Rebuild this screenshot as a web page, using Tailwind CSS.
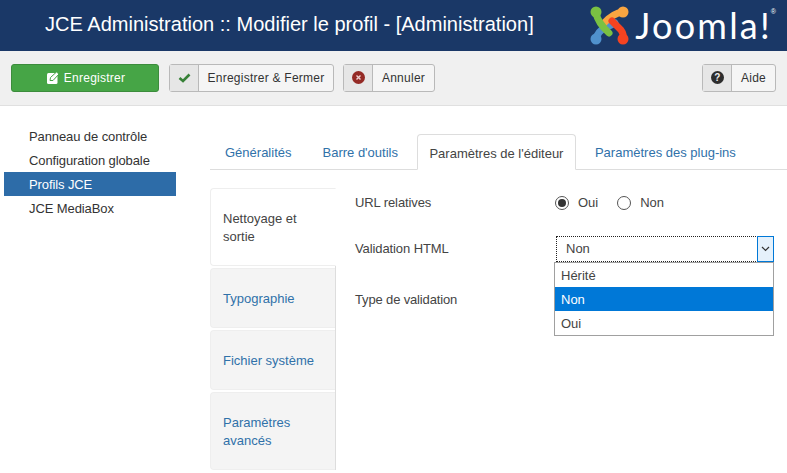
<!DOCTYPE html>
<html lang="fr">
<head>
<meta charset="UTF-8">
<title>JCE Administration</title>
<script src="https://cdn.jsdelivr.net/npm/@tailwindcss/browser@4"></script>
</head>
<body class="bg-white font-['Liberation_Sans',Arial,sans-serif] text-[13px] text-[#333] overflow-hidden h-[473px]">

<!-- header -->
<header class="h-[51px] bg-[#1a3867] flex items-center justify-between pl-[45px] pr-[11px]">
  <h1 class="text-[20.05px] text-white -mt-[2px]">JCE Administration :: Modifier le profil - [Administration]</h1>
  <div class="flex items-center">
    <svg width="40" height="42" viewBox="592 4 40 42" class="mr-[5px]">
      <g fill="none" stroke-width="7" stroke-linecap="round">
        <path d="M598 38 Q600 30 607 27 L617 22" stroke="#5091cd"/>
        <path d="M625 11 Q615 12 605 23" stroke="#f9a541"/>
        <path d="M598 12 Q600 22 611 32" stroke="#7ac143"/>
        <path d="M614 20 L623 29 Q626 33 625 38" stroke="#f44321"/>
      </g>
      <circle cx="598" cy="11" r="5.5" fill="#7ac143"/>
      <circle cx="625" cy="11" r="5.5" fill="#f9a541"/>
      <circle cx="598" cy="38" r="5.5" fill="#5091cd"/>
      <circle cx="625" cy="38" r="5.5" fill="#f44321"/>
    </svg>
    <span class="font-['Lato',sans-serif] text-[36px] leading-none font-normal text-white tracking-[2.2px] -mt-[1px]">Joomla!</span>
    <span class="text-[7px] text-white self-start -ml-[1px] mt-[2px]">®</span>
  </div>
</header>

<!-- toolbar -->
<div class="h-[55px] bg-[#f0f0f0] border-b border-[#e0e0e0] flex items-center px-[11px] pb-[1px]">
  <button class="w-[148px] h-[28px] pl-[2px] bg-[#46a546] border border-[#3c8c3c] rounded-[3px] text-white flex items-center justify-center gap-[5px] text-[12px] tracking-[0.25px]">
    <svg width="12" height="12" viewBox="0 0 12 12"><rect x="0" y="1" width="10.5" height="11" rx="1.5" fill="#fff"/><path d="M3 8.5 L3.5 5.5 L9.5 0 L12 2 L6 8.5 Z" fill="#fff" stroke="#46a546" stroke-width="1"/></svg>
    Enregistrer
  </button>
  <button class="ml-[10px] w-[165px] h-[28px] flex items-stretch border border-[#b9b9b9] rounded-[3px] bg-[#f5f5f5] text-[12px] tracking-[0.25px]">
    <span class="w-[29px] bg-[#e6e6e6] border-r border-[#b9b9b9] flex items-center justify-center">
      <svg width="13" height="10" viewBox="0 0 13 10"><path d="M1.5 5 L5 8 L11.5 1.5" fill="none" stroke="#378137" stroke-width="2.6"/></svg>
    </span>
    <span class="flex-1 flex items-center justify-center">Enregistrer &amp; Fermer</span>
  </button>
  <button class="ml-[9px] w-[92px] h-[28px] flex items-stretch border border-[#b9b9b9] rounded-[3px] bg-[#f5f5f5] text-[12px] tracking-[0.25px]">
    <span class="w-[29px] bg-[#e6e6e6] border-r border-[#b9b9b9] flex items-center justify-center">
      <svg width="13" height="13" viewBox="0 0 13 13"><circle cx="6.5" cy="6.5" r="6.5" fill="#942a25"/><path d="M4.5 4.5 L8.5 8.5 M8.5 4.5 L4.5 8.5" stroke="#f0d0d0" stroke-width="1.4"/></svg>
    </span>
    <span class="flex-1 flex items-center justify-center">Annuler</span>
  </button>
  <button class="ml-auto w-[74px] h-[28px] flex items-stretch border border-[#b9b9b9] rounded-[3px] bg-[#f5f5f5] text-[12px] tracking-[0.25px]">
    <span class="w-[29px] bg-[#e6e6e6] border-r border-[#b9b9b9] flex items-center justify-center">
      <svg width="13" height="13" viewBox="0 0 13 13"><circle cx="6.5" cy="6.5" r="6.5" fill="#2d2d2d"/><text x="6.5" y="10.2" text-anchor="middle" font-size="10" font-weight="700" font-family="Liberation Sans" fill="#f0f0f0">?</text></svg>
    </span>
    <span class="flex-1 flex items-center justify-center">Aide</span>
  </button>
</div>

<div class="flex">
  <!-- side menu -->
  <nav class="w-[172px] ml-[4px] pt-[18px] shrink-0 tracking-[-0.1px]">
    <a class="block h-[24px] leading-[25px] pl-[25px]">Panneau de contrôle</a>
    <a class="block h-[24px] leading-[25px] pl-[25px]">Configuration globale</a>
    <a class="block h-[24px] leading-[25px] pl-[25px] bg-[#2d6ca8] text-white">Profils JCE</a>
    <a class="block h-[24px] leading-[25px] pl-[25px]">JCE MediaBox</a>
  </nav>

  <main class="ml-[34px] flex-1 pt-[28px]">
    <!-- tabs -->
    <div class="flex h-[36px] border-b border-[#ddd] pl-[2px] text-[#3071a9]">
      <a class="px-[13px] leading-[38px]">Généralités</a>
      <a class="ml-[5px] px-[13px] leading-[38px]">Barre d'outils</a>
      <a class="ml-[6px] w-[159px] text-center h-[36px] leading-[38px] bg-white border border-[#ddd] border-b-white rounded-t-[4px] text-[#444]">Paramètres de l'éditeur</a>
      <a class="ml-[6px] px-[13px] leading-[38px]">Paramètres des plug-ins</a>
    </div>

    <div class="flex mt-[18px]">
      <!-- vertical tabs -->
      <div class="w-[126px] shrink-0 flex flex-col gap-[2px] border-r border-[#ddd]">
        <div class="h-[78px] -mr-[1px] px-[12px] pt-[2px] flex items-center leading-[18px] bg-white border border-[#eee] border-r-white rounded-l-[4px] text-[#444]">Nettoyage et<br>sortie</div>
        <div class="h-[60px] px-[12px] pt-[2px] flex items-center leading-[18px] bg-[#f4f4f4] border border-[#eee] border-r-0 rounded-l-[4px] text-[#3071a9]">Typographie</div>
        <div class="h-[60px] px-[12px] pt-[2px] flex items-center leading-[18px] bg-[#f4f4f4] border border-[#eee] border-r-0 rounded-l-[4px] text-[#3071a9]">Fichier système</div>
        <div class="h-[78px] px-[12px] pt-[2px] flex items-center leading-[18px] bg-[#f4f4f4] border border-[#eee] border-r-0 rounded-l-[4px] text-[#3071a9]">Paramètres<br>avancés</div>
      </div>

      <!-- form -->
      <div class="relative flex-1 pl-[19px] text-[#444]">
        <div class="flex items-center h-[28px] pt-[2px]">
          <span class="w-[200px] tracking-[-0.1px]">URL relatives</span>
          <span class="w-[14px] h-[14px] rounded-full border border-[#555] flex items-center justify-center"><span class="w-[8px] h-[8px] rounded-full bg-[#333]"></span></span>
          <span class="ml-[9px]">Oui</span>
          <span class="ml-[19px] w-[14px] h-[14px] rounded-full border border-[#555]"></span>
          <span class="ml-[9px]">Non</span>
        </div>
        <div class="flex items-center h-[27px] mt-[19px]">
          <span class="w-[201px] tracking-[-0.1px]">Validation HTML</span>
          <div class="w-[218px] h-[26px] border border-dotted border-[#222] flex items-center justify-between pl-[9px]">
            Non
            <span class="w-[17px] h-[26px] -mr-[1px] bg-[#e5f1fb] border border-[#0078d7] flex items-center justify-center">
              <svg width="9" height="6" viewBox="0 0 9 6"><path d="M1 1 L4.5 4.5 L8 1" fill="none" stroke="#333" stroke-width="1.2"/></svg>
            </span>
          </div>
        </div>
        <div class="h-[28px] mt-[24px] leading-[28px] tracking-[-0.15px]">Type de validation</div>

        <!-- open dropdown -->
        <ul class="absolute left-[218px] top-[74px] w-[220px] border border-[#a0a0a0] bg-white">
          <li class="h-[24px] leading-[25px] pl-[6px]">Hérité</li>
          <li class="h-[24px] leading-[25px] pl-[6px] bg-[#0078d7] text-white">Non</li>
          <li class="h-[24px] leading-[25px] pl-[6px]">Oui</li>
        </ul>
      </div>
    </div>
  </main>
</div>
</body>
</html>
